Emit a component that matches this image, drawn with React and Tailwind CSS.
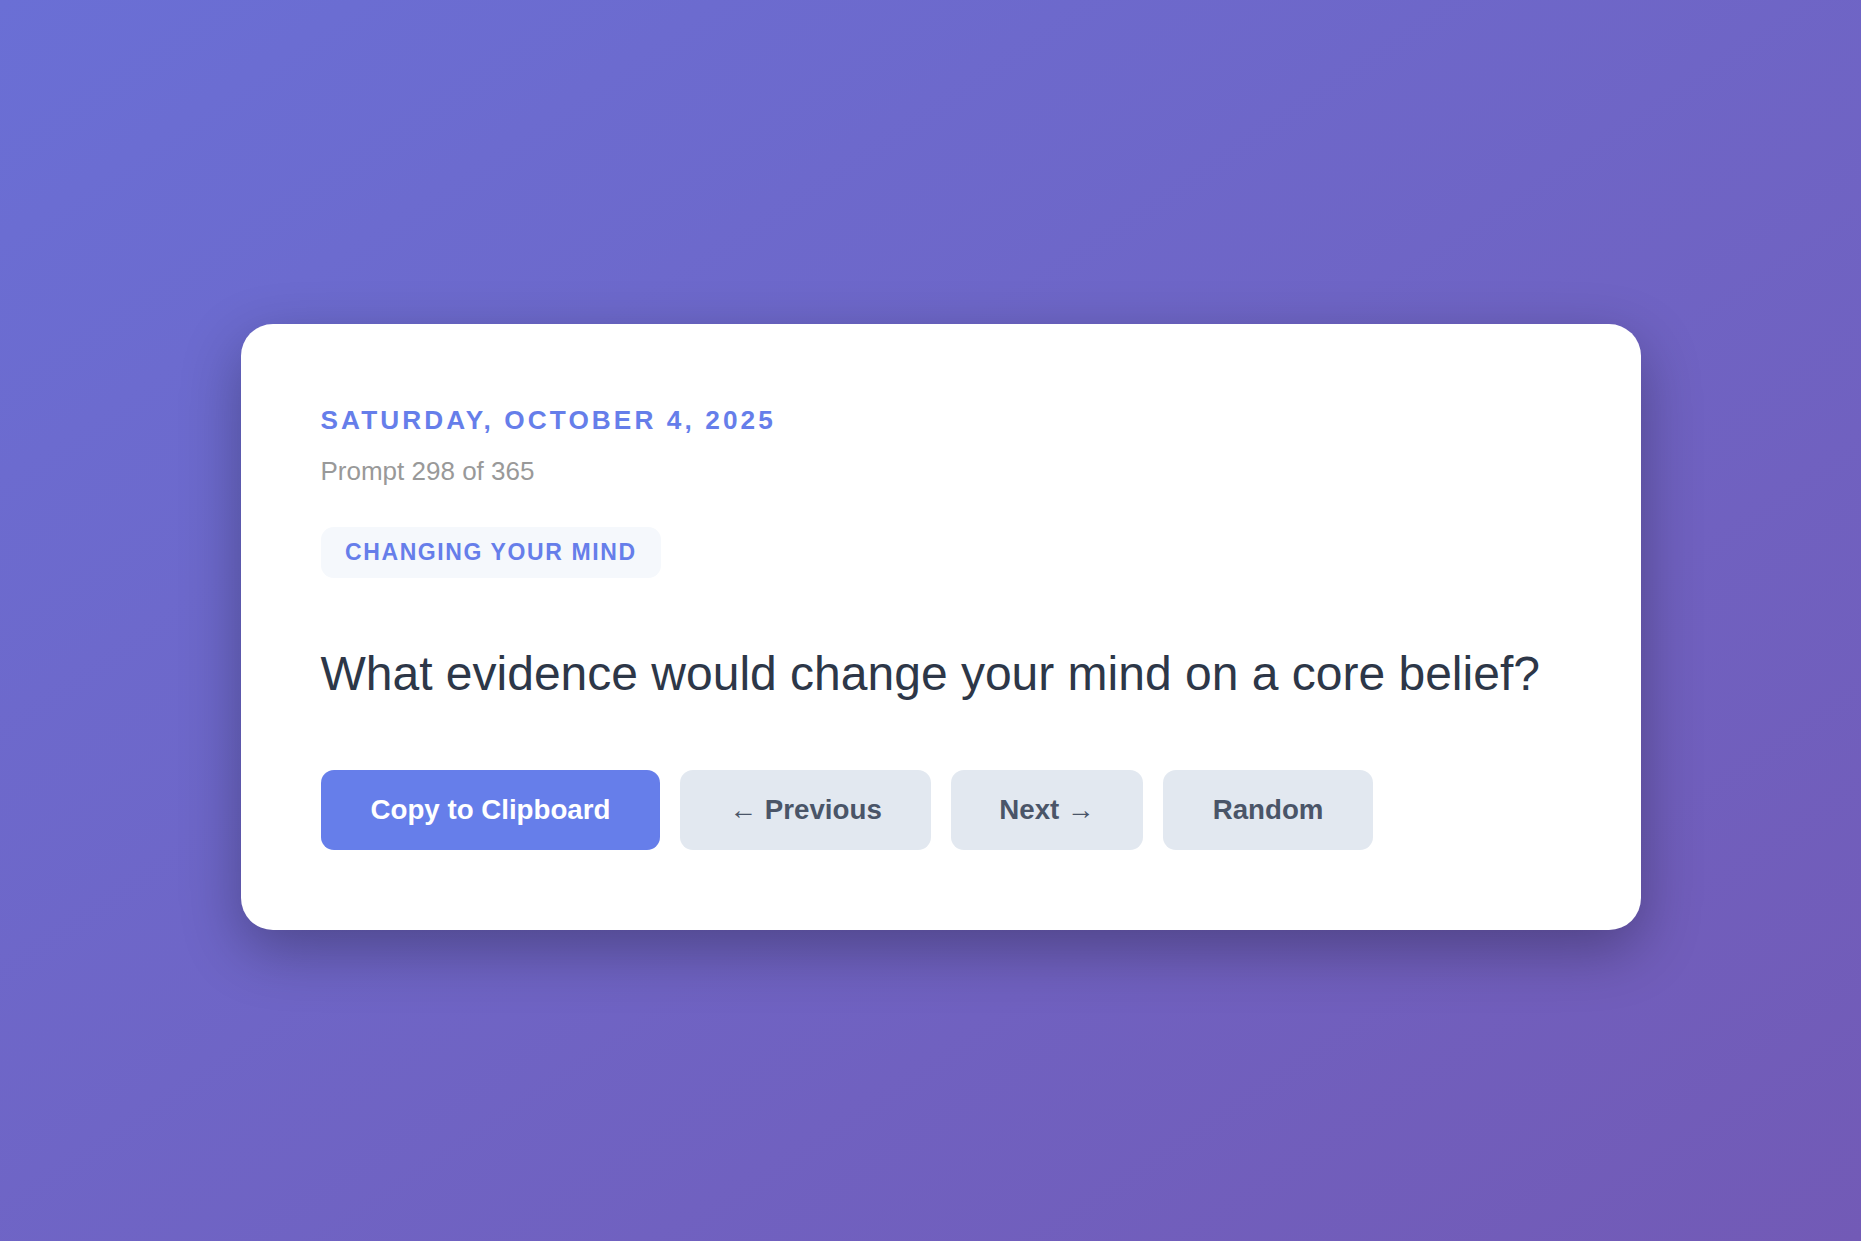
import React from "react";

function App() {
  const prompt = {
    date: "Saturday, October 4, 2025",
    index: 298,
    total: 365,
    theme: "Changing Your Mind",
    text: "What evidence would change your mind on a core belief?",
  };

  return (
    <div className="min-h-screen w-full flex items-center justify-center pl-[20px] pt-[13px] bg-gradient-to-br from-[#6a6fd5] to-[#725ab6] font-['Liberation_Sans',Arial,sans-serif]">
      {/* Prompt card */}
      <div className="w-[1400px] bg-white rounded-[32px] p-[80px] shadow-[0_20px_60px_rgba(0,0,0,0.3)]">
        <div className="text-[26.2px] leading-[32px] font-bold uppercase tracking-[3.1px] text-[#667eea]">
          {prompt.date}
        </div>
        <div className="mt-[19px] text-[26px] leading-[32px] text-[#999999]">
          Prompt {prompt.index} of {prompt.total}
        </div>

        <div className="mt-[40px] inline-block px-[24.5px] py-[12.8px] rounded-[12.8px] bg-[#f5f8fc] text-[23px] leading-[26px] font-bold uppercase tracking-[1.6px] text-[#667eea]">
          {prompt.theme}
        </div>

        <p className="mt-[61.5px] text-[48px] leading-[67.2px] text-[#2d3748]">
          {prompt.text}
        </p>

        {/* Actions */}
        <div className="mt-[63.7px] flex gap-[20px]">
          <button className="px-[50px] py-[24px] rounded-[13px] bg-[#667eea] text-white text-[27.7px] leading-[32px] font-bold">
            Copy to Clipboard
          </button>
          <button className="px-[49px] py-[24px] rounded-[13px] bg-[#e2e8f0] text-[#4a5568] text-[27.7px] leading-[32px] font-bold">
            ← Previous
          </button>
          <button className="px-[48.5px] py-[24px] rounded-[13px] bg-[#e2e8f0] text-[#4a5568] text-[27.7px] leading-[32px] font-bold">
            Next →
          </button>
          <button className="px-[49.5px] py-[24px] rounded-[13px] bg-[#e2e8f0] text-[#4a5568] text-[27.7px] leading-[32px] font-bold">
            Random
          </button>
        </div>
      </div>
    </div>
  );
}

export default App;
